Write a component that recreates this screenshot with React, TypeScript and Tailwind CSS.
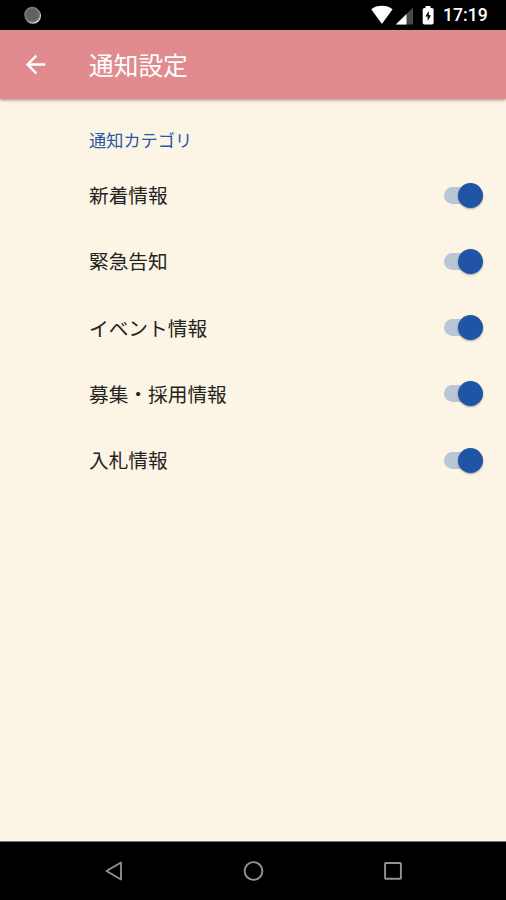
import { useState } from "react";

const categories: string[] = ["新着情報", "緊急告知", "イベント情報", "募集・採用情報", "入札情報"];

function StatusBar() {
  return (
    <div className="flex h-[30px] shrink-0 items-center justify-between bg-black pl-[23px] pr-[18px]">
      <svg width="19" height="19" viewBox="0 0 19 19" aria-hidden="true">
        <circle cx="10" cy="9.8" r="8" fill="#d8d8d8" />
        <circle cx="9.2" cy="8.7" r="8" fill="#777777" />
        <circle cx="9.2" cy="8.8" r="6.2" fill="#626262" />
      </svg>
      <div className="flex items-center">
        <svg width="70" height="30" viewBox="0 0 70 30" aria-hidden="true">
          <path d="M1.2 9.2C6.8 4.7 17 4.7 22.6 9.2L12.4 23.3Q11.9 23.9 11.4 23.3Z" fill="white" />
          <path d="M43 7.5V24.5H25.8Z" fill="#484848" />
          <path d="M36.5 13.9V24.5H25.8Z" fill="white" />
          <path d="M55.5 6H60.5V8H62Q63.6 8 63.6 9.6V22.8Q63.6 24.5 62 24.5H54.4Q52.7 24.5 52.7 22.8V9.6Q52.7 8 54.4 8H55.5Z" fill="white" />
          <path d="M58.8 11L55.4 16.6H57.7V21L61 15.2H58.8Z" fill="black" />
        </svg>
        <span className="relative top-px ml-[3px] w-[45px] whitespace-nowrap font-[Roboto,sans-serif] text-[17.6px] font-medium leading-none text-white">
          17:19
        </span>
      </div>
    </div>
  );
}

function AppBar() {
  return (
    <header className="z-10 flex h-[69px] shrink-0 items-center bg-[#e28b8e] pb-px shadow-[0_1px_3px_rgba(60,40,20,0.5)]">
      <button type="button" aria-label="戻る" className="ml-[20px] flex size-[30px] items-center justify-center">
        <svg width="29" height="29" viewBox="0 0 24 24" fill="white">
          <path d="M20 11H7.83l5.59-5.59L12 4l-8 8 8 8 1.41-1.41L7.83 13H20v-2z" />
        </svg>
      </button>
      <h1 className="ml-[39px] pb-px text-[24.7px] leading-[30px] text-white">通知設定</h1>
    </header>
  );
}

function CategoryRow({ label }: { label: string }) {
  const [on, setOn] = useState(true);
  return (
    <li className="flex h-[66.2px] items-center justify-between pl-[89px] pr-[23px]">
      <span className="text-[19.7px] leading-[30px] text-[#25231f]">{label}</span>
      <button
        type="button"
        role="switch"
        aria-checked={on}
        aria-label={label}
        onClick={() => setOn(!on)}
        className={`flex h-[17px] w-[39px] items-center rounded-full ${on ? "justify-end bg-[#bac6d5]" : "justify-start bg-[#bbb8b0]"}`}
      >
        <span className={`size-[25px] shrink-0 rounded-full shadow-[0_1px_2px_rgba(0,0,0,0.35)] ${on ? "bg-[#2054a5]" : "bg-[#f1f1f1]"}`} />
      </button>
    </li>
  );
}

function NavigationBar() {
  return (
    <nav className="flex h-[59px] shrink-0 items-center justify-between border-t border-[#77796b] bg-black pl-[103px] pr-[103px]">
      <svg width="20" height="22" viewBox="0 0 20 22" fill="none" stroke="#949494" strokeWidth="1.8" strokeLinejoin="round">
        <path d="M3.5 11L18 2.5V19.5Z" />
      </svg>
      <svg width="22" height="22" viewBox="0 0 22 22" fill="none" stroke="#949494" strokeWidth="1.9">
        <circle cx="11.5" cy="11" r="8.9" />
      </svg>
      <svg width="20" height="22" viewBox="0 0 20 22" fill="none" stroke="#949494" strokeWidth="1.9">
        <rect x="2.1" y="3" width="15.8" height="15.8" rx="0.8" />
      </svg>
    </nav>
  );
}

export default function App() {
  return (
    <div lang="ja" className="flex h-[900px] w-[506px] flex-col overflow-hidden bg-[#fcf5e5] font-['Noto_Sans_CJK_JP',sans-serif]">
      <StatusBar />
      <AppBar />
      <main className="flex-1 pt-[26px]">
        <h2 className="pl-[89px] text-[17.2px] leading-[30px] text-[#2858a5]">通知カテゴリ</h2>
        <ul className="mt-[7.2px]">
          {categories.map((label) => (
            <CategoryRow key={label} label={label} />
          ))}
        </ul>
      </main>
      <NavigationBar />
    </div>
  );
}
